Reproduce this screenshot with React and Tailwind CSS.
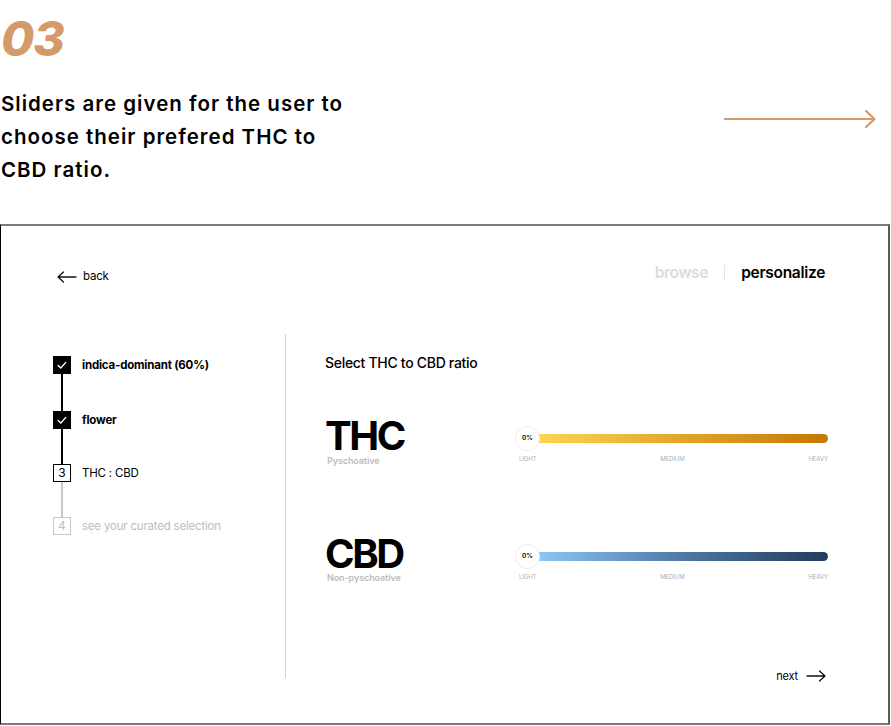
import React from "react";

function Check() {
  return (
    <svg width="12" height="12" viewBox="0 0 12 12" fill="none">
      <path d="M2.2 6.4l2.6 2.6 5-5.6" stroke="#fff" strokeWidth="1.4" strokeLinecap="round" strokeLinejoin="round" />
    </svg>
  );
}

function Step({ state, num, label, gap }) {
  const box =
    state === "done"
      ? "bg-black border-black text-white"
      : state === "current"
      ? "bg-white border-black text-black"
      : "bg-white border-[#c8c8c8] text-[#c0c0c0]";
  const text =
    state === "done"
      ? "font-bold text-black"
      : state === "current"
      ? "text-black"
      : "text-[#bdbdbd]";
  return (
    <div className="flex flex-col">
      <div className="flex items-center gap-[11px]">
        <div className={`w-[18px] h-[18px] border-[1.5px] flex items-center justify-center text-[12px] leading-none ${box}`}>
          {state === "done" ? <Check /> : num}
        </div>
        <span className={`text-[11.5px] tracking-[-0.2px] ${text}`}>{label}</span>
      </div>
      {gap && (
        <div className={`ml-[8px] w-[2px] ${gap} ${state === "current" ? "bg-[#c8c8c8]" : "bg-black"}`} />
      )}
    </div>
  );
}

function Slider({ gradient }) {
  return (
    <div className="w-[313px]">
      <div className="relative h-[25px] flex items-center">
        <div className={`ml-[22px] h-[9px] flex-1 rounded-r-full ${gradient}`} />
        <div className="absolute left-0 top-0 w-[25px] h-[25px] rounded-full bg-white border border-[#ececec] flex items-center justify-center text-[6.5px] font-semibold text-black">
          0%
        </div>
      </div>
      <div className="flex justify-between pl-[4px] mt-[5px] text-[6px] text-[#b0b0b0] uppercase leading-none tracking-[-0.1px]">
        <span>Light</span>
        <span>Medium</span>
        <span>Heavy</span>
      </div>
    </div>
  );
}

function Ratio({ name, sub, gradient, subGap }) {
  return (
    <div className="flex items-start">
      <div className="w-[190px]">
        <div className="text-[40px] font-bold leading-[30px] tracking-[-2.4px] text-black">{name}</div>
        <div className={`${subGap} ml-[2px] text-[9px] leading-[11px] font-semibold text-[#bdbdbd] tracking-[-0.1px]`}>{sub}</div>
      </div>
      <div className="mt-[5px]">
        <Slider gradient={gradient} />
      </div>
    </div>
  );
}

export default function App() {
  return (
    <div className="w-[891px] h-[726px] bg-white font-['Inter',sans-serif] overflow-hidden">
      {/* Intro */}
      <div className="h-[224px] flex justify-between">
        <div className="pl-[1px]">
          <div className="text-[48px] font-extrabold italic text-[#d49a6a] leading-none mt-[15px] tracking-[-1px]">
            03
          </div>
          <p className="mt-[24px] w-[352px] text-[20.5px] font-semibold leading-[33px] text-black tracking-[1px]">
            Sliders are given for the user to choose their prefered THC to CBD ratio.
          </p>
        </div>
        <svg className="mt-[107px] mr-[13px]" width="154" height="24" viewBox="0 0 154 24" fill="none">
          <path d="M0 12h151" stroke="#d49a6a" strokeWidth="2.2" />
          <path d="M142 4l8.5 8-8.5 8" stroke="#d49a6a" strokeWidth="2.2" strokeLinecap="round" strokeLinejoin="round" />
        </svg>
      </div>

      {/* Frame */}
      <div className="w-[890px] h-[501px] border border-black border-t-2 border-t-[#7a7a7a] border-b-2 border-b-[#7a7a7a] border-r-2 border-r-[#5a5a5a] flex flex-col">
        <div className="flex justify-between items-center pl-[56px] pr-[63px] pt-[33px]">
          <div className="flex items-center gap-[6px] mt-[9px] text-[11.5px] text-black tracking-[-0.2px]">
            <svg width="20" height="12" viewBox="0 0 20 12" fill="none">
              <path d="M1 6h18M6.5 1L1 6l5.5 5" stroke="#111" strokeWidth="1.3" strokeLinecap="round" strokeLinejoin="round" />
            </svg>
            back
          </div>
          <div className="flex items-center text-[15.5px] font-semibold tracking-[-0.3px]">
            <span className="text-[#dcdcdc]">browse</span>
            <span className="mx-[16px] w-px h-[15px] bg-[#e4e4e4]" />
            <span className="text-black">personalize</span>
          </div>
        </div>

        <div className="flex mt-[49px] h-[344px]">
          <div className="w-[285px] border-r border-[#d6d6d6] pl-[52px] pt-[22px]">
            <Step state="done" label="indica-dominant (60%)" gap="h-[37px]" />
            <Step state="done" label="flower" gap="h-[35px]" />
            <Step state="current" num="3" label="THC : CBD" gap="h-[35px]" />
            <Step state="todo" num="4" label="see your curated selection" />
          </div>

          <div className="flex-1 flex flex-col pl-[39px]">
            <div className="mt-[20px] text-[14px] leading-[17px] font-medium text-black tracking-[-0.3px]">
              Select THC to CBD ratio
            </div>

            <div className="mt-[50px]">
              <Ratio
                name="THC"
                sub="Pyschoative"
                subGap="mt-[4px]"
                gradient="bg-gradient-to-r from-[#fdd552] via-[#e1a52a] to-[#c47700]"
              />
            </div>

            <div className="mt-[73px]">
              <Ratio
                name="CBD"
                sub="Non-pyschoative"
                subGap="mt-[3px]"
                gradient="bg-gradient-to-r from-[#8fc7f7] via-[#4f79a4] to-[#223c5c]"
              />
            </div>

            <div className="mt-auto self-end mr-[62px] flex items-center gap-[8px] mb-[-6px] text-[11px] text-black tracking-[-0.2px]">
              next
              <svg width="20" height="12" viewBox="0 0 20 12" fill="none">
                <path d="M1 6h18M13.5 1L19 6l-5.5 5" stroke="#111" strokeWidth="1.3" strokeLinecap="round" strokeLinejoin="round" />
              </svg>
            </div>
          </div>
        </div>
      </div>
    </div>
  );
}
